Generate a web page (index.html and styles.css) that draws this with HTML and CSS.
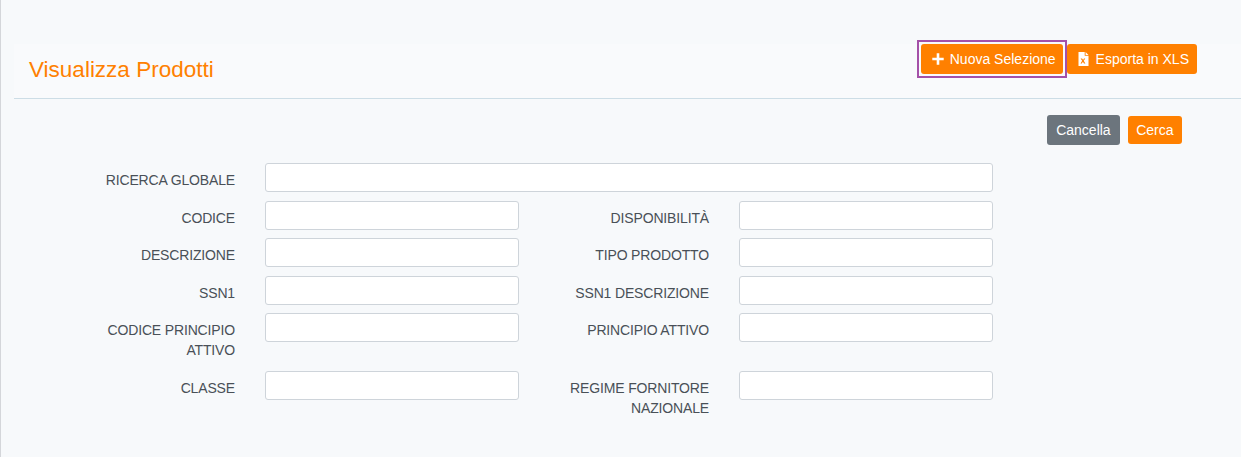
FILE: index.html
```html
<!DOCTYPE html>
<html lang="en">
<head>
    <meta charset="UTF-8">
    <title>Visualizza Prodotti</title>
    <link rel="stylesheet" href="styles.css">
</head>
<body>
    <main class="content">
        <header class="page-head">
            <h1>Visualizza Prodotti</h1>
            <div class="head-actions">
                <button type="button" class="btn btn-orange btn-focus">
                    <svg class="icon icon-plus" width="12" height="12" viewBox="0 0 12 12"><path d="M4.7 0.3h2.6v4.4h4.4v2.6H7.3v4.4H4.7V7.3H0.3V4.7h4.4z" fill="#fff"/></svg>
                    Nuova Selezione
                </button>
                <button type="button" class="btn btn-orange">
                    <svg class="icon icon-file" width="11" height="14" viewBox="0 0 11 14"><path fill-rule="evenodd" d="M0.5 0h6.2v3.8h3.8V14H0.5zM7.6 0l2.9 2.9H7.6zM2.6 6.4l1.6 2.4-1.7 2.6h1.3l1.1-1.7 1.1 1.7h1.4L5.7 8.8l1.6-2.4H6l-.9 1.5-1-1.5z" fill="#fff"/></svg>
                    Esporta in XLS
                </button>
            </div>
        </header>

        <div class="search-actions">
            <button type="button" class="btn btn-gray">Cancella</button>
            <button type="button" class="btn btn-orange btn-small">Cerca</button>
        </div>

        <form class="search-form">
            <label for="globale">RICERCA GLOBALE</label>
            <input type="text" id="globale" class="wide">

            <label for="codice">CODICE</label>
            <input type="text" id="codice">
            <label for="disponibilita">DISPONIBILITÀ</label>
            <input type="text" id="disponibilita">

            <label for="descrizione">DESCRIZIONE</label>
            <input type="text" id="descrizione">
            <label for="tipo">TIPO PRODOTTO</label>
            <input type="text" id="tipo">

            <label for="ssn1">SSN1</label>
            <input type="text" id="ssn1">
            <label for="ssn1-descr">SSN1 DESCRIZIONE</label>
            <input type="text" id="ssn1-descr">

            <label for="cod-principio">CODICE PRINCIPIO ATTIVO</label>
            <input type="text" id="cod-principio">
            <label for="principio">PRINCIPIO ATTIVO</label>
            <input type="text" id="principio">

            <label for="classe">CLASSE</label>
            <input type="text" id="classe">
            <label for="regime">REGIME FORNITORE NAZIONALE</label>
            <input type="text" id="regime">
        </form>
    </main>
</body>
</html>
```

FILE: styles.css
```css
* {
    box-sizing: border-box;
}
html, body {
    height: 100%;
}
body {
    margin: 0;
    overflow: hidden;
    font-family: "Liberation Sans", Arial, sans-serif;
    font-size: 14px;
    color: #495057;
    background-color: #f7f9fb;
    border-left: 1px solid #d4d6da;
}
.content {
    padding: 44px 0 0 13px;
}
.page-head {
    display: flex;
    justify-content: space-between;
    height: 55px;
    padding: 0 44px 0 15px;
    background-color: #f9fafc;
    border-bottom: 1px solid #cddde6;
}
h1 {
    margin: 0;
    padding-top: 13px;
    font-size: 22.5px;
    font-weight: normal;
    line-height: 26px;
    color: #ff8000;
}
.head-actions {
    display: flex;
    gap: 4px;
    align-items: flex-start;
}
.btn {
    display: inline-flex;
    align-items: center;
    justify-content: center;
    height: 30px;
    padding: 0 8px;
    border: none;
    border-radius: 3px;
    font-family: inherit;
    font-size: 14px;
    color: #fff;
    cursor: pointer;
}
.btn-orange {
    background-color: #ff8000;
}
.btn-gray {
    padding: 0 9px;
    background-color: #6c757d;
}
.btn-small {
    height: 28px;
    padding: 0 8.5px;
}
.btn-focus {
    position: relative;
    padding-right: 7px;
}
.btn-focus::after {
    content: "";
    position: absolute;
    top: -4px;
    right: -4px;
    bottom: -4px;
    left: -4px;
    border: 2px solid #a450a8;
}
.icon {
    margin-left: 3px;
}
.icon-plus {
    margin-right: 6px;
}
.icon-file {
    margin-right: 7px;
}
.search-actions {
    display: flex;
    justify-content: flex-end;
    align-items: center;
    gap: 8px;
    padding: 16px 59px 0 0;
}
.search-form {
    display: grid;
    grid-template-columns: 155px 254px 160px 254px;
    column-gap: 30px;
    row-gap: 8.5px;
    align-items: start;
    margin-top: 18px;
    padding-left: 66px;
}
.search-form label {
    padding: 7px 0 2px;
    letter-spacing: -0.15px;
    line-height: 20px;
    text-align: right;
}
.search-form input {
    height: 29px;
    padding: 4px 8px;
    border: 1px solid #ced4da;
    border-radius: 3px;
    background-color: #fff;
}
.search-form .wide {
    grid-column: 2 / span 3;
}
```
